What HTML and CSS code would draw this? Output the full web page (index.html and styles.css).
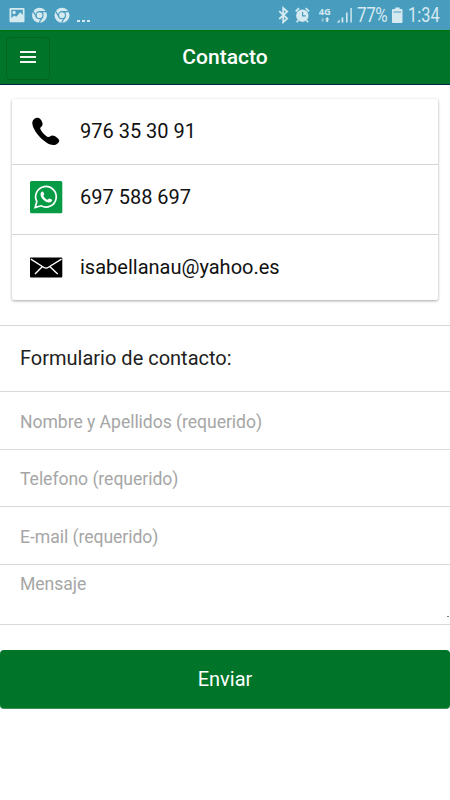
FILE: index.html
```html
<!DOCTYPE html>
<html lang="es">
<head>
<meta charset="utf-8">
<title>Contacto</title>
<link rel="stylesheet" href="styles.css">
</head>
<body>
<div class="status">
  <svg class="status-left" width="66" height="30" viewBox="0 0 66 30">
    <path fill-rule="evenodd" d="M1.500 8h13q1 0 1 1v12.300q0 1-1 1H1.500q-1 0-1-1V9q0-1 1-1zM2.300 9.800v8.200l3-2.400 2 1.200 3.900-4.500 2.600 2.800V9.800zM5.100 10.800a1.700 1.700 0 1 1 0 3.400a1.700 1.700 0 1 1 0-3.400z"/>
    <g id="chrome">
      <circle cx="30.500" cy="15.200" r="7.500"/>
      <g class="cut"><circle cx="30.500" cy="15.200" r="3.500"/><path d="M30.500 11.700h6.600M27.500 17l-3.500-6M33.500 17l-3.400 5.800"/></g>
      <circle cx="30.500" cy="15.200" r="2.500"/>
    </g>
    <use href="#chrome" x="22.500"/>
  </svg>
  <span class="dots"><i></i><i></i><i></i></span>
  <svg class="status-right" width="76" height="30" viewBox="278 0 76 30">
    <path class="line" d="M279.200 11.200l8 7.400-4 3.600V8l4 3.600-8 7.400"/>
    <circle cx="302.300" cy="15.700" r="6.200"/>
    <path class="line" d="M295.700 11.300l3.300-3.200M309 11.300l-3.300-3.200M298.300 20.200l-1.600 2M306.400 20.200l1.600 2"/>
    <path class="cut" d="M302.600 12v3.800h3.200"/>
    <text x="318.800" y="15.200" textLength="12" lengthAdjust="spacingAndGlyphs">4G</text>
    <path class="dim" d="M321.700 18h2v2h1l-2 2.300-2-2.300h1z"/>
    <path d="M326.200 22v-2.500h-1.200l2.200-2.500 2.200 2.500h-1.200V22z"/>
    <path d="M336.800 22.500l3-3v3zM341.600 17.500h1.700v5h-1.700zM346 12.500h1.600v10H346zM350.400 8h1.400v14.500h-1.400z"/>
  </svg>
  <span class="percent">77%</span>
  <svg class="battery" width="11" height="30" viewBox="0 0 11 30">
    <path d="M3.200 7.500h4.500V9H9.500q1 0 1 1v12q0 1-1 1h-8.500q-1 0-1-1V10q0-1 1-1h2.200z"/>
    <path class="gap" d="M1.500 11h7.600v2H1.500z"/>
  </svg>
  <span class="clock">1:34</span>
</div>
<header class="bar">
  <button class="menu" aria-label="Menú"><i></i><i></i><i></i></button>
  <h1>Contacto</h1>
</header>
<main>
  <section class="card">
    <div class="row phone">
      <svg width="34" height="34" viewBox="0 0 34 34"><path d="M3.500 6.500C4.500 3 9 1.500 11.200 4C13 6 14.200 8.500 13.400 10.200C12.800 11.800 11.200 12 11.200 13.400C12.200 16.300 15.500 20.200 18.800 21.900C20.600 22.500 21.500 20.500 23.500 20.400C25.800 20.300 29.500 23.200 30.200 25.200C30.500 27.800 27.200 30 24.500 30C19.500 30 13 24.800 9.300 20.200C5.600 15.700 2.500 10 3.500 6.500z"/></svg>
      <span>976 35 30 91</span>
    </div>
    <div class="row whatsapp">
      <svg width="34" height="34" viewBox="0 0 34 34">
        <rect class="wa-bg" x="1" y="1" width="32.300" height="32.300" rx="1.500"/>
        <path class="wa-line" d="M6.200 27.500l1.600-6A10.300 10.300 0 1 1 12 25.800z"/>
        <path class="wa-phone" d="M12.500 12c.8-.8 1.600-.6 1.900.2l.8 1.900c.2.700-.8 1.400-.8 1.800.9 1.800 2.400 3.100 4.200 3.800.7 0 1.300-1.400 2-1.200l2.100 1c.8.500.2 1.800-.4 2.300-2.400 1.800-6-.2-8-2.100-2-2-4-5.600-1.800-7.700z"/>
      </svg>
      <span>697 588 697</span>
    </div>
    <div class="row mail">
      <svg width="34" height="34" viewBox="0 0 34 34">
        <rect x="1" y="7.500" width="32.300" height="20" rx="1"/>
        <path class="fold" d="M1.800 9.200L15 17.500q2 1.200 4 0L32.500 9.200M13.200 16.700L6 24M21 16.700L28.700 24"/>
      </svg>
      <span>isabellanau@yahoo.es</span>
    </div>
  </section>
  <form class="form">
    <h2>Formulario de contacto:</h2>
    <input class="name" placeholder="Nombre y Apellidos (requerido)">
    <input class="tel" placeholder="Telefono (requerido)">
    <input class="email" placeholder="E-mail (requerido)">
    <div class="message"><textarea placeholder="Mensaje"></textarea><i class="grip"></i></div>
    <button class="send" type="button">Enviar</button>
  </form>
</main>
</body>
</html>
```
FILE: styles.css
```css
* { box-sizing: border-box; }
body { margin: 0; background: #fff; color: #111; font-family: Roboto, sans-serif; overflow: hidden; }
svg { display: block; flex: none; }
h1, h2 { margin: 0; }

.status { display: flex; align-items: center; height: 30px; padding-left: 9px; background: #489dbe; color: #d5e9f1; }
.status svg { fill: #d5e9f1; }
.status .cut { fill: none; stroke: #489dbe; stroke-width: 1.2; }
.status .line { fill: none; stroke: #d5e9f1; stroke-width: 1.8; }
.status .dim { opacity: .4; }
.status .gap { fill: #8fc3d8; }
.status text { font: 700 9.500px "Open Sans", sans-serif; }
.dots { display: flex; gap: 2.500px; width: 16px; margin: 12px 0 0 2px; }
.dots i { width: 2.500px; height: 2.500px; background: #d5e9f1; }
.status-right { margin-left: 185px; }
.percent { width: 31px; margin-left: 3px; padding-top: 2px; font-size: 19.500px; line-height: 30px; letter-spacing: -.4px; transform: scaleX(.87); transform-origin: left; white-space: nowrap; }
.battery { margin-left: 4px; }
.clock { margin-left: 5px; padding-top: 2px; font-size: 19.500px; line-height: 30px; transform: scaleX(.84); transform-origin: left; }

.bar { display: grid; grid-template-columns: 44px 1fr 44px; align-items: center; height: 55px; padding: 0 6px; background: #007529; border-top: 1px solid #007500; border-bottom: 1px solid #052548; }
.menu { display: flex; flex-direction: column; align-items: center; justify-content: center; gap: 3px; width: 44px; height: 43px; margin: 1px 0 0; padding: 0 0 2px; border: 1px solid #006321; border-radius: 4px; background: none; }
.menu i { width: 16px; height: 2px; background: #f2f7f3; }
h1 { margin-top: -2px; color: #fff; font-size: 21px; font-weight: 500; text-align: center; }

.card { margin: 14px 12px 0; border-radius: 2px; background: #fff; box-shadow: 0 1px 3px rgba(0,0,0,.35); height: 201px; }
.row { display: flex; align-items: center; gap: 17px; padding-left: 17px; border-bottom: 1px solid #d5d5d5; font-size: 20px; }
.row span { margin-top: -2px; }
.phone { height: 66px; }
.whatsapp { height: 70px; }
.row.whatsapp span { margin-top: -5px; }
.whatsapp svg { margin-top: -5px; }
.mail { height: 65px; border: 0; }
.mail svg { margin-top: -2px; }
.wa-bg { fill: #079b45; }
.wa-line { fill: none; stroke: #fff; stroke-width: 1.700; }
.wa-phone { fill: #fff; }
.fold { fill: none; stroke: #fff; stroke-width: 1.400; }

.form { display: flex; flex-direction: column; margin-top: 25px; border-top: 1px solid #d6d6d6; }
h2 { height: 66px; padding-left: 20px; border-bottom: 1px solid #d9d9d9; color: #222; font-size: 20px; font-weight: 400; line-height: 65px; }
input, textarea { display: block; width: 100%; margin: 0; padding: 0 20px; border: 0; border-bottom: 1px solid #d9d9d9; border-radius: 0; background: none; font: 17.600px Roboto, sans-serif; letter-spacing: -.05px; outline: 0; }
::placeholder { color: #a6a6a6; opacity: 1; }
.name { height: 58px; padding-top: 2px; }
.tel { height: 57px; padding-top: 2px; }
.email { height: 58px; padding-top: 2px; }
.message { position: relative; height: 60px; }
textarea { height: 60px; padding-top: 9px; resize: none; }
.grip { position: absolute; right: 1px; bottom: 8px; width: 2px; height: 1px; background: #777; }
.send { height: 59px; margin-top: 25px; padding: 0; border: 0; border-bottom: 1px solid #3c9158; border-radius: 4px; background: #007529; color: #fff; font: 400 20px Roboto, sans-serif; }
```
